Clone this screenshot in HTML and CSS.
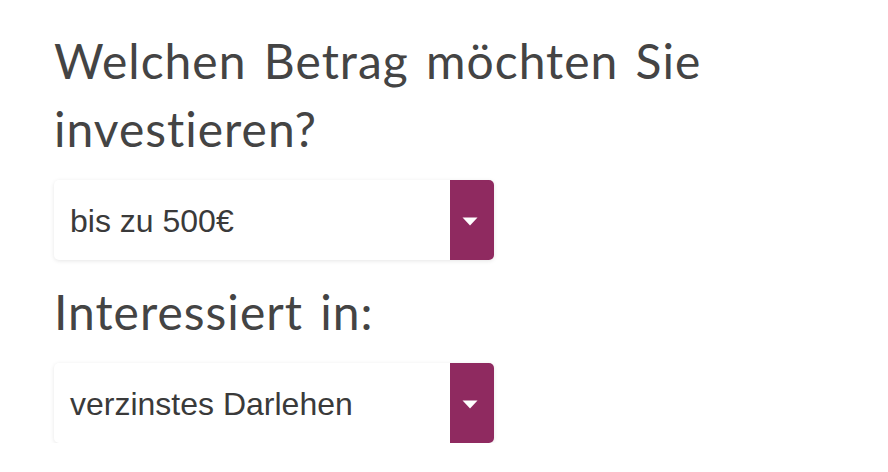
FILE: index.html
```html
<!DOCTYPE html>
<html lang="de">
<head>
<meta charset="utf-8">
<link rel="stylesheet" href="styles.css">
</head>
<body>
<form class="form">
  <div class="field">
    <label class="label">Welchen Betrag möchten Sie investieren?</label>
    <div class="select">
      <span class="value">bis zu 500€</span>
      <span class="arrow"><svg width="16" height="9" viewBox="0 0 16 9"><path d="M0.5 0.5 H15.5 L8 8.5 Z" fill="#fff"/></svg></span>
    </div>
  </div>
  <div class="field">
    <label class="label">Interessiert in:</label>
    <div class="select">
      <span class="value">verzinstes Darlehen</span>
      <span class="arrow"><svg width="16" height="9" viewBox="0 0 16 9"><path d="M0.5 0.5 H15.5 L8 8.5 Z" fill="#fff"/></svg></span>
    </div>
  </div>
</form>
</body>
</html>
```
FILE: styles.css
```css
html, body {
  margin: 0;
  background: #fff;
}
.form {
  display: flex;
  flex-direction: column;
  gap: 18px;
  padding: 27px 0 0 54px;
}
.field {
  display: flex;
  flex-direction: column;
  gap: 17px;
}
.label {
  display: block;
  width: 700px;
  font-family: "Lato", sans-serif;
  font-weight: 400;
  font-size: 48px;
  line-height: 68px;
  letter-spacing: 1px;
  word-spacing: 4px;
  font-variant-ligatures: none;
  color: #444;
}
.select {
  display: flex;
  width: 440px;
  height: 80px;
  background: #fff;
  border-radius: 5px;
  box-shadow: 0 1px 4px rgba(0, 0, 0, 0.1);
  overflow: hidden;
}
.value {
  flex: 1;
  display: flex;
  align-items: center;
  padding: 2px 0 0 16px;
  font-family: "Liberation Sans", Arial, sans-serif;
  font-size: 32px;
  color: #3a3a3a;
}
.arrow {
  width: 44px;
  display: flex;
  align-items: center;
  justify-content: center;
  padding: 2px 4px 0 0;
  box-sizing: border-box;
  background: #8f2a60;
}
```
